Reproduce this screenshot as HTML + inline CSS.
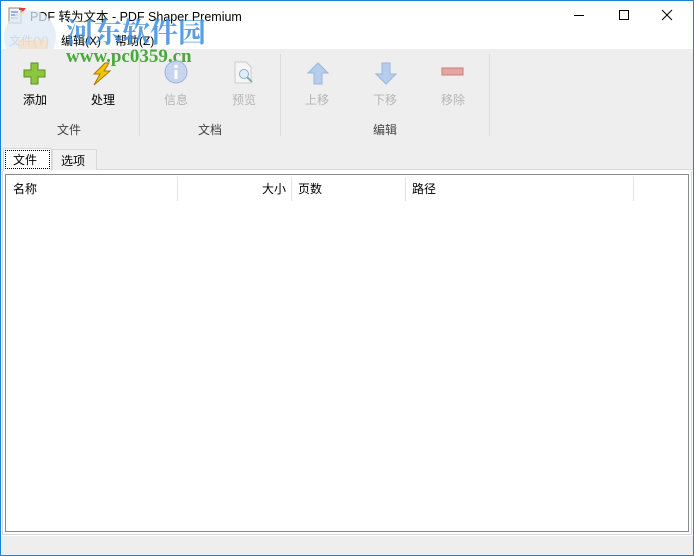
<!DOCTYPE html><html><head><meta charset="utf-8"><style>
*{margin:0;padding:0;box-sizing:border-box}
body{width:694px;height:556px;overflow:hidden;font-family:"Liberation Sans","Microsoft YaHei","Noto Sans CJK SC",sans-serif;font-size:12px;color:#000;background:#fff;position:relative}
.a{position:absolute}
.t{white-space:nowrap}
.dis{color:#b5b5b5}
</style></head><body>
<div class="a" style="left:0;top:0;width:694px;height:556px;border:1px solid #1883d7;"></div>
<svg class="a" style="left:8px;top:7px" width="18" height="18"><rect x="1" y="1" width="12" height="15" fill="#f4f4f4" stroke="#888"/><path d="M3 5h7M3 8h7M3 11h7" stroke="#3a6fc0"/><path d="M11 2l5 0-4 6" stroke="#e33" stroke-width="2" fill="none"/><path d="M12 8l4 -3" stroke="#fc0" stroke-width="2"/></svg>
<div class="a t" style="left:30px;top:6px;font-size:12.5px">PDF 转为文本 - PDF Shaper Premium</div>
<svg class="a" style="left:560px;top:8px" width="130" height="16"><path d="M14 7.5h10" stroke="#000"/><rect x="59.5" y="2.5" width="9" height="9" fill="none" stroke="#000"/><path d="M102 2l10 10M112 2l-10 10" stroke="#000"/></svg>
<div class="a t" style="left:9px;top:32px;color:#9ab">文件(Y)</div>
<div class="a t" style="left:61px;top:32px">编辑(X)</div>
<div class="a t" style="left:115px;top:32px">帮助(Z)</div>
<div class="a" style="left:4px;top:10px;width:52px;height:54px;border-radius:50%;background:#dde9f6;opacity:.75"></div>
<div class="a" style="left:18px;top:40px;width:30px;height:22px;border-radius:0 0 20px 20px;background:#f9d9b8;opacity:.6"></div>
<div class="a t" style="left:66px;top:11px;font-size:28px;font-weight:bold;color:#3d8fe0;opacity:.85;font-family:'Noto Serif CJK SC',serif">河东软件园</div>
<div class="a" style="left:1px;top:49px;width:692px;height:120px;background:#eeeeee"></div>
<div class="a t" style="left:66px;top:46px;font-size:19px;font-weight:bold;color:#4aa83c;font-family:'Liberation Serif',serif">www.pc0359.cn</div>
<svg class="a" style="left:23px;top:62px" width="24" height="24"><path d="M8 1h7v7h7v7h-7v7H8v-7H1V8h7z" fill="#8cc63e" stroke="#5a8e20"/></svg>
<svg class="a" style="left:90px;top:62px" width="24" height="24"><path d="M15 1L4 12h6L4 23 20 9h-6l5-8z" fill="#f5c400" stroke="#a87a00"/></svg>
<svg class="a" style="left:164px;top:60px" width="24" height="24"><circle cx="12" cy="12" r="11" fill="#c7d6ee" stroke="#9fb3d8"/><circle cx="12" cy="6.5" r="1.8" fill="#fff"/><rect x="10.5" y="10" width="3" height="9" fill="#fff"/></svg>
<svg class="a" style="left:233px;top:61px" width="24" height="24"><path d="M2 1h11l5 5v16H2z" fill="#f5f5f5" stroke="#ccc"/><circle cx="11" cy="13" r="4.5" fill="#dfeefb" stroke="#9ab"/><path d="M14 16l5 5" stroke="#8ab" stroke-width="2"/></svg>
<svg class="a" style="left:306px;top:62px" width="24" height="24"><path d="M12 1L2 11h6v11h8V11h6z" fill="#b6cdee" stroke="#9ab6df"/></svg>
<svg class="a" style="left:374px;top:62px" width="24" height="24"><path d="M8 1h8v11h6L12 22 2 12h6z" fill="#b6cdee" stroke="#9ab6df"/></svg>
<svg class="a" style="left:441px;top:67px" width="24" height="10"><rect x="1" y="1" width="21" height="7" fill="#e8a4a4" stroke="#cc7c7c"/></svg>
<div class="a t" style="left:23px;top:91px">添加</div>
<div class="a t" style="left:91px;top:91px">处理</div>
<div class="a t dis" style="left:164px;top:91px">信息</div>
<div class="a t dis" style="left:232px;top:91px">预览</div>
<div class="a t dis" style="left:305px;top:91px">上移</div>
<div class="a t dis" style="left:373px;top:91px">下移</div>
<div class="a t dis" style="left:441px;top:91px">移除</div>
<div class="a t" style="left:57px;top:121px;color:#444">文件</div>
<div class="a t" style="left:198px;top:121px;color:#444">文档</div>
<div class="a t" style="left:373px;top:121px;color:#444">编辑</div>
<div class="a" style="left:139px;top:54px;width:1px;height:82px;background:#dcdcdc"></div>
<div class="a" style="left:280px;top:54px;width:1px;height:82px;background:#dcdcdc"></div>
<div class="a" style="left:489px;top:54px;width:1px;height:82px;background:#dcdcdc"></div>
<div class="a" style="left:1px;top:169px;width:692px;height:1px;background:#dadada"></div>
<div class="a" style="left:3px;top:148px;width:49px;height:23px;background:#fff;border:1px solid #d9d9d9;border-bottom:none"></div>
<div class="a" style="left:5px;top:150px;width:45px;height:19px;border:1px dotted #000"></div>
<div class="a t" style="left:13px;top:151px">文件</div>
<div class="a" style="left:52px;top:149px;width:45px;height:21px;background:#f0f0f0;border:1px solid #d9d9d9;border-bottom:none"></div>
<div class="a t" style="left:61px;top:152px">选项</div>
<div class="a" style="left:2px;top:171px;width:690px;height:364px;border:1px solid #d6d6d6;border-top:none"></div>
<div class="a" style="left:5px;top:174px;width:684px;height:358px;border:1px solid #858a94;background:#fff"></div>
<div class="a t" style="left:13px;top:180px">名称</div>
<div class="a t" style="left:262px;top:180px">大小</div>
<div class="a t" style="left:298px;top:180px">页数</div>
<div class="a t" style="left:412px;top:180px">路径</div>
<div class="a" style="left:177px;top:177px;width:1px;height:24px;background:#e3e3e3"></div>
<div class="a" style="left:291px;top:177px;width:1px;height:24px;background:#e3e3e3"></div>
<div class="a" style="left:405px;top:177px;width:1px;height:24px;background:#e3e3e3"></div>
<div class="a" style="left:633px;top:177px;width:1px;height:24px;background:#e3e3e3"></div>
<div class="a" style="left:1px;top:536px;width:692px;height:19px;background:#eeeeee"></div>
</body></html>
